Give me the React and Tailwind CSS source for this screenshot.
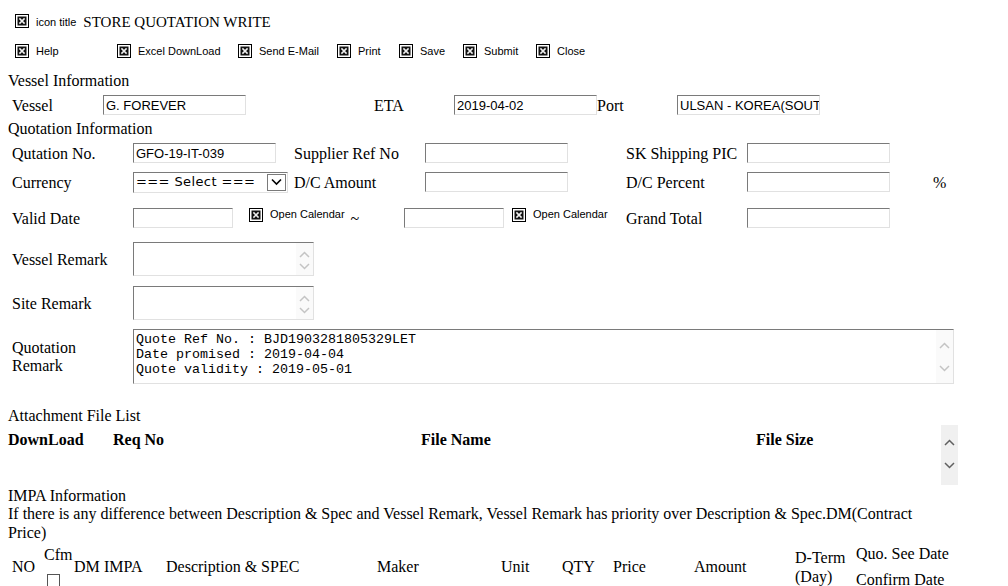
import { useState } from 'react'

const serif = "font-['Liberation_Serif','Times_New_Roman',serif] text-[16px] text-black"
const sans = "font-['Liberation_Sans',Arial,sans-serif]"
const boxBorder = 'border border-t-[#7a7a7a] border-l-[#7a7a7a] border-r-[#e1e1e1] border-b-[#e1e1e1] bg-white'

function BrokenIcon() {
  return (
    <svg width="14" height="14" viewBox="0 0 14 14" className="shrink-0">
      <rect x="0.5" y="0.5" width="13" height="13" fill="white" stroke="black" />
      <rect x="2.5" y="2.5" width="9" height="9" fill="#111" />
      <path d="M4.4 4.4 L9.6 9.6 M9.6 4.4 L4.4 9.6" stroke="#f0f0f0" strokeWidth="1.5" />
    </svg>
  )
}

function Chevron({ down, color = '#c4c4c4' }) {
  return (
    <svg width="11" height="7" viewBox="0 0 11 7">
      <path d={down ? 'M1 1 L5.5 5.5 L10 1' : 'M1 6 L5.5 1.5 L10 6'} fill="none" stroke={color} strokeWidth="1.5" />
    </svg>
  )
}

function Field({ className, value = '' }) {
  return (
    <div className={`${boxBorder} ${sans} h-[20px] shrink-0 overflow-hidden whitespace-nowrap px-[2px] text-[13px] leading-[19px] text-black ${className}`}>
      {value}
    </div>
  )
}

function TextBox({ className, lines = [], upClass, downClass }) {
  return (
    <div className={`${boxBorder} flex shrink-0 ${className}`}>
      <div className="flex-1 overflow-hidden px-[2px] pt-[2px] font-['Liberation_Mono','Courier_New',monospace] text-[13.33px] leading-[15px] text-black whitespace-pre">
        {lines.join('\n')}
      </div>
      <div className="flex w-[17px] flex-col items-center justify-between bg-[#fafafa]">
        <div className={upClass}><Chevron /></div>
        <div className={downClass}><Chevron down /></div>
      </div>
    </div>
  )
}

function ToolItem({ label, className }) {
  return (
    <div className={`flex shrink-0 items-center ${className}`}>
      <BrokenIcon />
      <span className={`${sans} ml-[7px] text-[11px] leading-[14px] text-black`}>{label}</span>
    </div>
  )
}

function Label({ className, children }) {
  return <div className={`${serif} shrink-0 leading-[19px] whitespace-nowrap ${className}`}>{children}</div>
}

export default function App() {
  const [checked, setChecked] = useState(false)

  return (
    <div className={`min-h-[586px] w-[1008px] overflow-hidden bg-white pl-[8px] pt-[10px] ${serif}`}>
      {/* title */}
      <div className="flex h-[22px] items-center pl-[7px]">
        <BrokenIcon />
        <span className={`${sans} ml-[7px] self-start pt-[5px] text-[11px] leading-[14px]`}>icon title</span>
        <span className="ml-[7px] pt-[2px] text-[15px] leading-[18px]">STORE QUOTATION WRITE</span>
      </div>

      {/* toolbar */}
      <div className="mt-[8px] flex h-[22px] items-center pl-[7px]">
        <ToolItem label="Help" className="w-[102px]" />
        <ToolItem label="Excel DownLoad" className="w-[121px]" />
        <ToolItem label="Send E-Mail" className="w-[99px]" />
        <ToolItem label="Print" className="w-[62px]" />
        <ToolItem label="Save" className="w-[64px]" />
        <ToolItem label="Submit" className="w-[73px]" />
        <ToolItem label="Close" className="w-[80px]" />
      </div>

      <Label className="mt-[9px] h-[19px]">Vessel Information</Label>
      <div className="mt-[3px] flex h-[24px] items-center pl-[4px]">
        <Label className="w-[91px]">Vessel</Label>
        <Field className="w-[143px]" value="G. FOREVER" />
        <div className="w-[128px] shrink-0" />
        <Label className="w-[80px]">ETA</Label>
        <Field className="w-[143px]" value="2019-04-02" />
        <Label className="w-[80px]">Port</Label>
        <Field className="w-[143px]" value="ULSAN - KOREA(SOUT" />
      </div>

      <Label className="mt-[2px] h-[19px]">Quotation Information</Label>
      <div className="mt-[3px] flex h-[24px] items-center pl-[4px]">
        <Label className="w-[121px]">Qutation No.</Label>
        <div className="w-[161px] shrink-0"><Field className="w-[143px]" value="GFO-19-IT-039" /></div>
        <Label className="w-[131px]">Supplier Ref No</Label>
        <div className="w-[201px] shrink-0"><Field className="w-[143px]" /></div>
        <Label className="w-[121px]">SK Shipping PIC</Label>
        <Field className="w-[143px]" />
      </div>

      <div className="mt-[5px] flex h-[24px] items-center pl-[4px]">
        <Label className="w-[121px]">Currency</Label>
        <div className="w-[161px] shrink-0">
          <div className={`${boxBorder} flex h-[21px] w-[155px] items-center`}>
            <span className="flex-1 overflow-hidden whitespace-pre pl-[2px] font-['DejaVu_Sans',Verdana,sans-serif] text-[13px] leading-[18px] tracking-[0.4px]">=== Select ===</span>
            <span className="mr-[1px] flex h-[17px] w-[19px] items-center justify-center border border-[#7a7a7a] bg-white">
              <svg width="11" height="8" viewBox="0 0 11 8">
                <path d="M1 1.5 L5.5 6 L10 1.5" fill="none" stroke="black" strokeWidth="1.6" />
              </svg>
            </span>
          </div>
        </div>
        <Label className="w-[131px]">D/C Amount</Label>
        <div className="w-[201px] shrink-0"><Field className="w-[143px]" /></div>
        <Label className="w-[121px]">D/C Percent</Label>
        <Field className="w-[143px]" />
        <Label className="ml-[43px]">%</Label>
      </div>

      <div className="mt-[12px] flex h-[24px] items-center pl-[4px]">
        <Label className="w-[121px]">Valid Date</Label>
        <Field className="w-[100px]" />
        <div className="flex w-[171px] shrink-0 items-start self-start pl-[16px] pt-[2px]">
          <BrokenIcon />
          <span className={`${sans} ml-[7px] text-[11px] leading-[13px]`}>Open Calendar</span>
          <span className="ml-[6px] mt-[1px] leading-[19px]">~</span>
        </div>
        <Field className="w-[100px]" />
        <div className="flex w-[122px] shrink-0 items-start self-start pl-[8px] pt-[2px]">
          <BrokenIcon />
          <span className={`${sans} ml-[7px] text-[11px] leading-[13px]`}>Open Calendar</span>
        </div>
        <Label className="w-[121px]">Grand Total</Label>
        <Field className="w-[143px]" />
      </div>

      <div className="mt-[12px] flex h-[34px] items-center pl-[4px]">
        <Label className="w-[121px]">Vessel Remark</Label>
        <TextBox className="h-[34px] w-[181px]" upClass="mt-[8px]" downClass="mb-[5px]" />
      </div>

      <div className="mt-[10px] flex h-[34px] items-center pl-[4px]">
        <Label className="w-[121px]">Site Remark</Label>
        <TextBox className="h-[34px] w-[181px]" upClass="mt-[8px]" downClass="mb-[5px]" />
      </div>

      <div className="mt-[9px] flex h-[55px] items-center pl-[4px]">
        <div className="w-[121px] shrink-0 leading-[18px]">Quotation<br />Remark</div>
        <TextBox
          className="h-[55px] w-[821px]"
          upClass="mt-[12px]"
          downClass="mb-[11px]"
          lines={['Quote Ref No. : BJD1903281805329LET', 'Date promised : 2019-04-04', 'Quote validity : 2019-05-01']}
        />
      </div>

      <Label className="mt-[22px] h-[19px]">Attachment File List</Label>
      <div className="flex h-[60px]">
        <div className="flex w-[933px] shrink-0 pt-[5px] font-bold leading-[19px]">
          <span className="w-[105px] shrink-0">DownLoad</span>
          <span className="w-[308px] shrink-0">Req No</span>
          <span className="w-[335px] shrink-0">File Name</span>
          <span>File Size</span>
        </div>
        <div className="flex h-[60px] w-[17px] flex-col items-center bg-[#f0f0f0] pt-[14px]">
          <Chevron color="#606060" />
          <div className="mt-[16px]"><Chevron down color="#606060" /></div>
        </div>
      </div>

      <Label className="mt-[1px] h-[18px] leading-[18px]">IMPA Information</Label>
      <p className="w-[940px] leading-[19px]">
        If there is any difference between Description &amp; Spec and Vessel Remark, Vessel Remark has priority over Description &amp; Spec.DM(Contract Price)
      </p>

      <div className="mt-[2px] flex h-[46px] items-center pl-[4px] whitespace-nowrap">
        <span className="w-[32px] shrink-0">NO</span>
        <div className="flex w-[30px] shrink-0 flex-col">
          <span className="leading-[16px]">Cfm</span>
          <button
            type="button"
            onClick={() => setChecked(!checked)}
            className="ml-[3px] mt-[11px] h-[13px] w-[13px] border border-[#555] bg-white"
          />
        </div>
        <span className="w-[30px] shrink-0">DM</span>
        <span className="w-[62px] shrink-0">IMPA</span>
        <span className="w-[211px] shrink-0">Description &amp; SPEC</span>
        <span className="w-[124px] shrink-0">Maker</span>
        <span className="w-[61px] shrink-0">Unit</span>
        <span className="w-[51px] shrink-0">QTY</span>
        <span className="w-[81px] shrink-0">Price</span>
        <span className="w-[101px] shrink-0">Amount</span>
        <div className="flex w-[61px] shrink-0 flex-col leading-[19px]">
          <span>D-Term</span>
          <span>(Day)</span>
        </div>
        <div className="flex flex-col gap-[8px] leading-[18px]">
          <span>Quo. See Date</span>
          <span>Confirm Date</span>
        </div>
      </div>
    </div>
  )
}
